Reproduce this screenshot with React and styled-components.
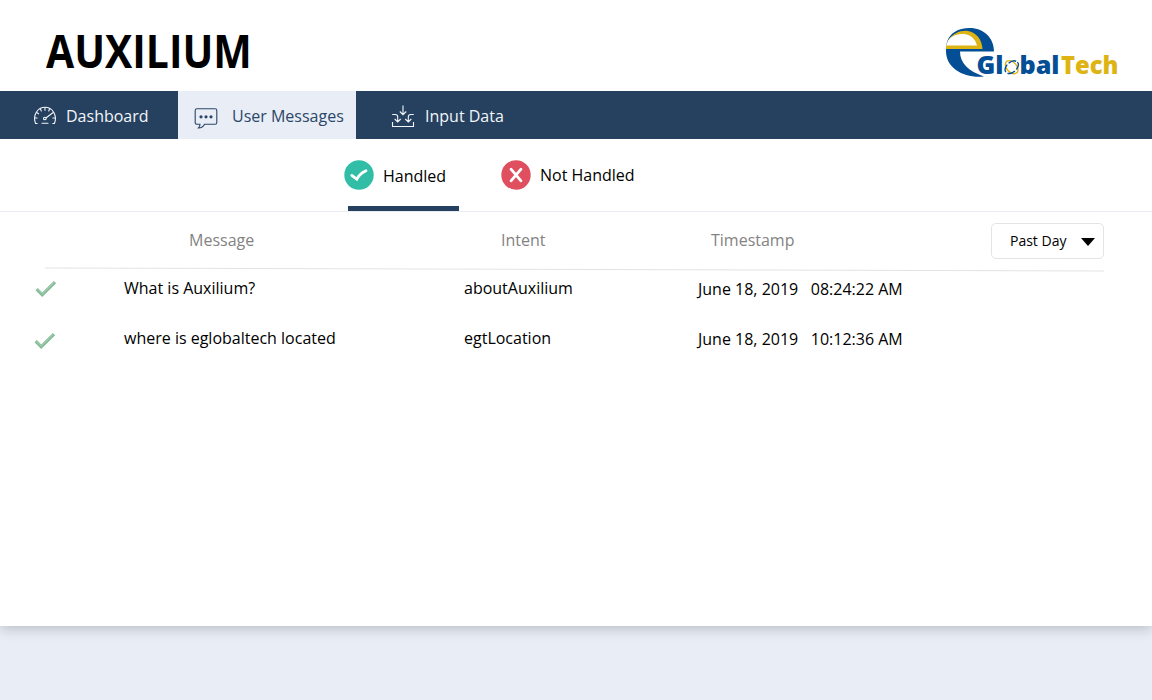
import React from "react";
import styled, { createGlobalStyle } from "styled-components";

const GlobalStyle = createGlobalStyle`
  * { box-sizing: border-box; }
  body { margin: 0; min-height: 700px; background: #e9edf6; font-family: "Open Sans", "Noto Sans", sans-serif; }
`;

const Card = styled.div`
  position: relative;
  height: 626px;
  background: #fff;
  box-shadow: 0 3px 12px rgba(0, 0, 0, 0.2);
  font-size: 16px;
  line-height: 24px;
  color: #000;
`;

const Header = styled.header`
  display: flex;
  justify-content: space-between;
  align-items: flex-start;
  height: 91px;
  padding: 20px 32px 0 46px;
`;

const Title = styled.h1`
  margin: 0;
  font-size: 46px;
  line-height: 60px;
  font-weight: 700;
  white-space: nowrap;
  transform: scaleX(${(p) => p.$scale});
  transform-origin: left center;
`;

const Logo = styled.svg`
  width: 176px;
  height: 54px;
  margin-top: 6px;
`;

const Nav = styled.nav`
  display: flex;
  height: 48px;
  background: #26415f;
`;

const NavItem = styled.a`
  display: flex;
  align-items: center;
  gap: ${(p) => p.$gap}px;
  width: 178px;
  padding: 2px 0 0 ${(p) => p.$pad}px;
  white-space: nowrap;
  background: ${(p) => (p.$active ? "#e9edf6" : "transparent")};
  color: ${(p) => (p.$active ? "#2b4767" : "#f2f5f9")};
`;

const NavIcon = styled.svg`
  flex: none;
  width: 24px;
  height: 24px;
  margin-top: ${(p) => p.$drop || 0}px;
  fill: none;
  stroke: currentColor;
  stroke-width: 1.1;
`;

const Tabs = styled.div`
  display: flex;
  height: 73px;
  padding-left: 344px;
  border-bottom: 1px solid #e9edf3;
`;

const Tab = styled.div`
  display: flex;
  align-items: flex-start;
  gap: ${(p) => p.$gap}px;
  width: 157px;
  padding-top: 21px;
  white-space: nowrap;
  background: ${(p) =>
    p.$active ? "linear-gradient(#26415f, #26415f) 4px 100% / 111px 5px no-repeat" : "none"};
`;

const TabLabel = styled.span`
  padding-top: ${(p) => p.$drop}px;
`;

const TabIcon = styled.svg`
  width: 30px;
  height: 30px;
  fill: none;
  stroke: #fff;
`;

const Row = styled.div`
  display: grid;
  grid-template-columns: 124px 340px 234px 1fr;
  align-items: start;
  height: 50px;
`;

const HeadRow = styled(Row)`
  grid-template-columns: 189px 312px 210px 280px 113px;
  height: 56px;
  padding-top: 11px;
  color: #838383;
`;

const HeadCell = styled.span`
  padding-top: 5px;
`;

const Select = styled.button`
  display: flex;
  align-items: center;
  justify-content: space-between;
  height: 36px;
  padding: 0 8px 1px 18px;
  border: 1px solid #e4e4e6;
  border-radius: 5px;
  background: #fff;
  color: #000;
  font: 14px "Open Sans", sans-serif;
`;

const Caret = styled.svg`
  width: 14px;
  height: 8px;
  margin-top: 3px;
`;

const Divider = styled.div`
  width: 1059px;
  height: 1px;
  margin: 1px 0 0 45px;
  background: #e3e3e5;
  transform: rotate(0.17deg);
`;

const Rows = styled.div`
  padding-top: 6px;
`;

const Check = styled.svg`
  width: 22px;
  height: 18px;
  margin: ${(p) => p.$top}px 0 0 ${(p) => p.$left}px;
  fill: none;
`;

const Stamp = styled.span`
  padding-top: 1px;
  white-space: pre;
`;

const Time = styled.span`
  margin-left: 12.5px;
`;

function BrandLogo() {
  return (
    <Logo viewBox="0 0 176 54" aria-label="eGlobalTech">
      <path
        fill="#034e94"
        d="M3 16C6 7 14 2 25.5 2C40 2 50 12 50 25.5H16C16 37 24 45 40 50.5C21 52.5 2 43 2 25V20Z"
      />
      <path fill="#fff" d="M2 20L3.5 15.5C7 9 13 7 19 7.5C27 8 32 12 34 20Z" />
      <path
        fill="#ddb413"
        d="M4 14.5C9 7 17 4 24 5C32 6.5 38 13 38.5 23H2V19.5H33C31 12 26 8.3 19 8C12 8 8 10 4 14.5Z"
      />
      <g fontFamily="Open Sans, sans-serif" fontWeight="800" fontSize="24.5">
        <text x="32.5" y="47.7" textLength="27" lengthAdjust="spacingAndGlyphs" fill="#034e94" stroke="#fff" strokeWidth="1.2" paintOrder="stroke">Gl</text>
        <text x="75.5" y="47.7" textLength="40" lengthAdjust="spacingAndGlyphs" fill="#034e94">bal</text>
        <text x="117" y="47.7" textLength="57.5" lengthAdjust="spacingAndGlyphs" fill="#ddb413">Tech</text>
      </g>
      <g fill="none" strokeWidth="1.4">
        <ellipse cx="67.7" cy="41.2" rx="7.6" ry="5" transform="rotate(48 67.7 41.2)" stroke="#ddb413" />
        <ellipse cx="67.7" cy="41.2" rx="7.6" ry="5" transform="rotate(-42 67.7 41.2)" stroke="#034e94" strokeDasharray="8 2" />
      </g>
    </Logo>
  );
}

function GaugeIcon() {
  return (
    <NavIcon viewBox="0 0 24 24" strokeLinecap="round">
      <path d="M4.2 19.5H2.6C-.8 11 4.8 3.3 12 3.3S24.8 11 21.4 19.5H19.8" />
      <path d="M12 3.5v2.7M7.3 4.8l1 2.1M16.7 4.8l-1 2.1M3.6 8.5l2 1.3M20.4 8.5l-2 1.3M1.6 14h2.5M22.4 14h-2.5M9 19.3h6M13.2 13.7l5-3.7" />
      <circle cx="11.8" cy="14.5" r="1.3" />
    </NavIcon>
  );
}

function MessageIcon() {
  return (
    <NavIcon viewBox="0 0 24 24" $drop={6}>
      <path d="M3 1.7h18a1.8 1.8 0 0 1 1.8 1.8v12a1.8 1.8 0 0 1-1.8 1.8H10.5C9.5 19.5 7.5 21 4.5 21C5.5 20 6 19 6 17.3H3a1.8 1.8 0 0 1-1.8-1.8v-12A1.8 1.8 0 0 1 3 1.7Z" />
      <g fill="currentColor" stroke="none">
        <circle cx="7" cy="9.8" r="1.6" />
        <circle cx="12" cy="9.8" r="1.6" />
        <circle cx="17" cy="9.8" r="1.6" />
      </g>
    </NavIcon>
  );
}

function InputIcon() {
  return (
    <NavIcon viewBox="0 0 24 24" $drop={2}>
      <path d="M1.5 17v4.5h21V17" />
      <path d="M12 .5v9M8.8 6.5L12 9.7l3.2-3.2M1.2 9.5h3c1.6 0 2.5 1 2.5 2.5v5M3.7 14l3 3 3-3M22.8 9.5h-3c-1.6 0-2.5 1-2.5 2.5v5M14.3 14l3 3 3-3" />
    </NavIcon>
  );
}

function RowCheck(props) {
  return (
    <Check viewBox="0 0 22 18" {...props}>
      <path d="M1.7 9.2L7.2 14.8L20 2.2" stroke="#83bb96" strokeWidth="3.2" />
      <path d="M2.5 9.2L7.2 13.8L19.2 2.2" stroke="#9bcaaa" strokeWidth="1.4" />
    </Check>
  );
}

const messages = [
  { text: "What is Auxilium?", intent: "aboutAuxilium", date: "June 18, 2019", time: "08:24:22 AM", top: 4, left: 35 },
  { text: "where is eglobaltech located", intent: "egtLocation", date: "June 18, 2019", time: "10:12:36 AM", top: 6, left: 34 },
];

export default function App() {
  return (
    <>
      <GlobalStyle />
      <Card>
        <Header>
          <Title $scale={0.888}>AUXILIUM</Title>
          <BrandLogo />
        </Header>
        <Nav>
          <NavItem $pad={33} $gap={9}><GaugeIcon />Dashboard</NavItem>
          <NavItem $pad={16} $gap={14} $active><MessageIcon />User Messages</NavItem>
          <NavItem $pad={35} $gap={10}><InputIcon />Input Data</NavItem>
        </Nav>
        <Tabs>
          <Tab $active $gap={9}>
            <TabIcon viewBox="0 0 30 30">
              <circle cx="15" cy="15" r="14.7" fill="#32bea6" stroke="none" />
              <path d="M7.8 15.4L12.8 19.2C15 15 18 12.5 22 10.8" strokeWidth="2.8" strokeLinecap="round" />
            </TabIcon>
            <TabLabel $drop={4}>Handled</TabLabel>
          </Tab>
          <Tab $gap={9}>
            <TabIcon viewBox="0 0 30 30">
              <circle cx="15" cy="15" r="14.7" fill="#e04f5f" stroke="none" />
              <path d="M10 9.2L20 20.8M20 9.2L10 20.8" strokeWidth="2.8" strokeLinecap="round" />
            </TabIcon>
            <TabLabel $drop={3}>Not Handled</TabLabel>
          </Tab>
        </Tabs>
        <HeadRow>
          <span />
          <HeadCell>Message</HeadCell>
          <HeadCell>Intent</HeadCell>
          <HeadCell>Timestamp</HeadCell>
          <Select>
            Past Day
            <Caret viewBox="0 0 14 8"><path d="M0 0H14L7 8Z" /></Caret>
          </Select>
        </HeadRow>
        <Divider />
        <Rows>
          {messages.map((m) => (
            <Row key={m.intent}>
              <RowCheck $top={m.top} $left={m.left} />
              <span>{m.text}</span>
              <span>{m.intent}</span>
              <Stamp>{m.date}<Time>{m.time}</Time></Stamp>
            </Row>
          ))}
        </Rows>
      </Card>
    </>
  );
}
